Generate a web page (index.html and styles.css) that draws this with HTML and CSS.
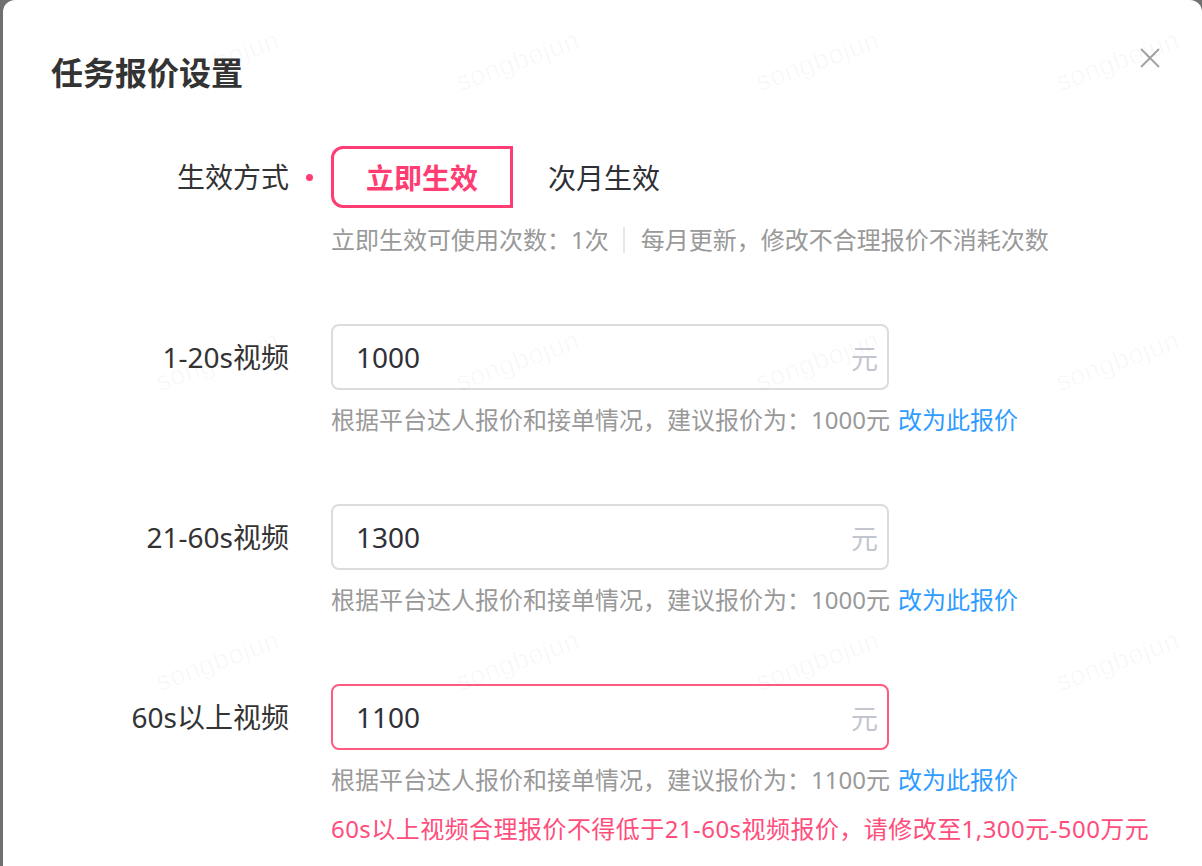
FILE: index.html
```html
<!DOCTYPE html>
<html lang="zh-CN">
<head>
<meta charset="utf-8">
<title>任务报价设置</title>
<link rel="stylesheet" href="styles.css">
</head>
<body>
<div class="modal">
  <div class="header">
    <h2 class="title">任务报价设置</h2>
    <button class="close" aria-label="关闭">
      <svg width="20" height="20" viewBox="0 0 20 20"><path d="M1 1L19 19M19 1L1 19" stroke="#a3a3a3" stroke-width="2" fill="none"/></svg>
    </button>
  </div>

  <div class="form">
    <div class="row row-mode">
      <div class="label">生效方式</div>
      <div class="mark"><span class="dot"></span></div>
      <div class="content">
        <div class="segment">
          <span class="seg seg-active">立即生效</span>
          <span class="seg">次月生效</span>
        </div>
        <div class="hint">立即生效可使用次数：1次<span class="divider"></span>每月更新，修改不合理报价不消耗次数</div>
      </div>
    </div>

    <div class="row">
      <div class="label">1-20s视频</div>
      <div class="mark"></div>
      <div class="content">
        <div class="input"><span class="value">1000</span><span class="suffix">元</span></div>
        <div class="hint">根据平台达人报价和接单情况，建议报价为：1000元 <span class="link">改为此报价</span></div>
      </div>
    </div>

    <div class="row">
      <div class="label">21-60s视频</div>
      <div class="mark"></div>
      <div class="content">
        <div class="input"><span class="value">1300</span><span class="suffix">元</span></div>
        <div class="hint">根据平台达人报价和接单情况，建议报价为：1000元 <span class="link">改为此报价</span></div>
      </div>
    </div>

    <div class="row">
      <div class="label">60s以上视频</div>
      <div class="mark"></div>
      <div class="content">
        <div class="input input-error"><span class="value">1100</span><span class="suffix">元</span></div>
        <div class="hint">根据平台达人报价和接单情况，建议报价为：1100元 <span class="link">改为此报价</span></div>
        <div class="error">60s以上视频合理报价不得低于21-60s视频报价，请修改至1,300元-500万元</div>
      </div>
    </div>
  </div>

  <div class="watermarks" aria-hidden="true">
    <span class="wm">songbojun</span><span class="wm">songbojun</span><span class="wm">songbojun</span><span class="wm">songbojun</span>
    <span class="wm">songbojun</span><span class="wm">songbojun</span><span class="wm">songbojun</span><span class="wm">songbojun</span>
    <span class="wm">songbojun</span><span class="wm">songbojun</span><span class="wm">songbojun</span><span class="wm">songbojun</span>
  </div>
</div>
</body>
</html>
```

FILE: styles.css
```css
html, body {
  margin: 0;
  padding: 0;
  height: 100%;
  overflow: hidden;
}
body {
  background: #707070;
  font-family: "Noto Sans", "Noto Sans CJK SC", sans-serif;
  color: #333;
}
.modal {
  position: relative;
  margin-left: 3px;
  width: 1199px;
  height: 900px;
  background: #fff;
  border-radius: 12px 12px 0 0;
  overflow: hidden;
}
.header {
  display: flex;
  justify-content: space-between;
  align-items: flex-start;
  padding: 49px 42px 0 48px;
}
.title {
  margin: 0;
  font-family: "Noto Sans CJK SC", sans-serif;
  font-size: 32px;
  line-height: 44px;
  font-weight: 700;
  color: #333;
}
.close {
  margin-top: -1px;
  padding: 0;
  border: 0;
  background: none;
  width: 20px;
  height: 20px;
  display: flex;
}
.form {
  padding-top: 53px;
}
.row {
  display: grid;
  grid-template-columns: 286px 42px 1fr;
  margin-bottom: 68px;
}
.label {
  text-align: right;
  font-size: 28px;
  height: 66px;
  line-height: 66px;
  color: #333;
  white-space: nowrap;
}
.row-mode .label {
  height: 62px;
  line-height: 62px;
}
.mark {
  height: 62px;
  display: flex;
  align-items: center;
  justify-content: center;
}
.dot {
  width: 7px;
  height: 7px;
  border-radius: 50%;
  background: #ff3d73;
  margin-left: -1px;
}
.segment {
  display: flex;
  height: 62px;
}
.seg {
  box-sizing: border-box;
  width: 182px;
  height: 62px;
  display: flex;
  align-items: center;
  justify-content: center;
  font-size: 28px;
  color: #2e3036;
  border: 3px solid transparent;
}
.seg-active {
  border-color: #ff3d73;
  border-radius: 12px 0 0 12px;
  color: #ff3d73;
  font-weight: 700;
}
.hint {
  margin-top: 14px;
  font-size: 24px;
  line-height: 32px;
  color: #999;
  white-space: nowrap;
  display: flex;
  align-items: center;
}
.row-mode .hint {
  margin-top: 16px;
}
.divider {
  display: inline-block;
  width: 2px;
  height: 26px;
  background: #e8e8e8;
  margin: 0 16px 0 14px;
}
.link {
  color: #2f9cff;
  margin-left: 8px;
}
.input {
  box-sizing: border-box;
  width: 558px;
  height: 66px;
  border: 2px solid #dcdcdc;
  border-radius: 8px;
  display: flex;
  align-items: center;
  justify-content: space-between;
  padding: 0 9px 0 23px;
}
.input-error {
  border-color: #ff5a80;
}
.value {
  font-size: 28px;
  color: #2e3036;
}
.suffix {
  font-size: 27px;
  color: #c3c6cf;
}
.error {
  margin-top: 17px;
  font-size: 24px;
  line-height: 32px;
  color: #ff4d7c;
  white-space: nowrap;
  letter-spacing: 0.45px;
}
.watermarks {
  position: absolute;
  inset: 0;
  pointer-events: none;
  display: grid;
  grid-template-columns: repeat(4, 300px);
  grid-auto-rows: 300px;
  padding: 46px 0 0 150px;
  align-items: start;
  justify-items: start;
}
.wm {
  display: inline-block;
  font-family: "Liberation Sans", "Noto Sans", sans-serif;
  font-size: 27px;
  line-height: 30px;
  color: rgba(0, 0, 0, 0.03);
  transform: rotate(-20deg);
  letter-spacing: 0.5px;
}
```
